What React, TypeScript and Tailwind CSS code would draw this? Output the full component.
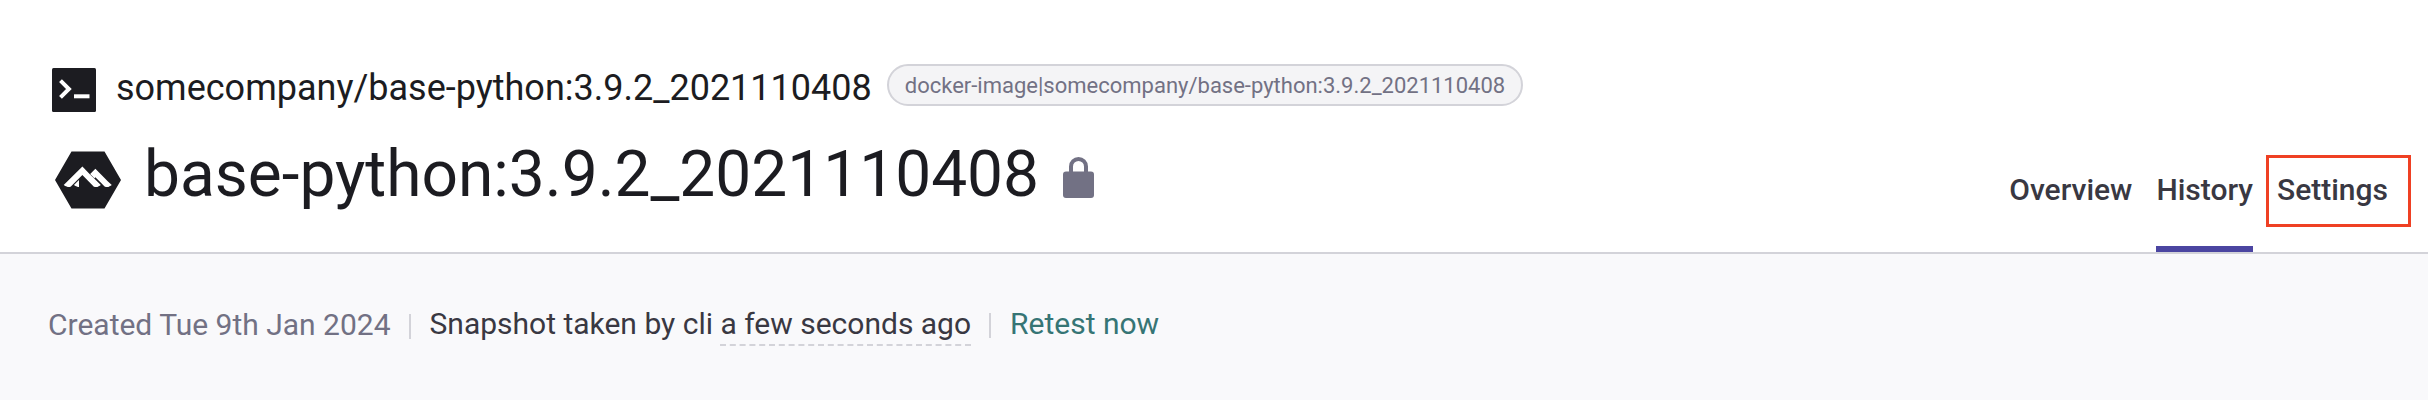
import { SiAlpinelinux } from "react-icons/si";

function TerminalIcon() {
  return (
    <svg className="h-11 w-11 shrink-0" viewBox="0 0 44 44" fill="none">
      <rect width="44" height="44" rx="1.5" fill="#1c1c21" />
      <path d="M8.5 12.7 L16.9 21 L8.5 29.3" stroke="#fff" strokeWidth="4" />
      <path d="M22 28.3H37.500" stroke="#fff" strokeWidth="4" />
    </svg>
  );
}

function LockIcon() {
  return (
    <svg className="h-[41px] w-[31px]" viewBox="0 0 31 41" fill="none">
      <rect y="14.500" width="31" height="26.500" rx="3" fill="#727184" />
      <path d="M8 15V9.500a7.500 7.500 0 0 1 15 0V15" stroke="#727184" strokeWidth="4" />
    </svg>
  );
}

export default function App() {
  return (
    <div className="h-[400px] w-full overflow-hidden bg-[#f9f9fb] font-['Roboto',sans-serif] whitespace-nowrap">
      <header className="flex h-[254px] justify-between border-b-2 border-[#d3d3d9] bg-white">
        <div className="pt-[62px] pl-[52px]">
          <div className="flex h-[50px] items-start">
            <div className="pt-1.5">
              <TerminalIcon />
            </div>
            <span className="ml-5 text-[36px] leading-[52px] text-[#1c1c21]">
              somecompany/base-python:3.9.2_2021110408
            </span>
            <span className="mt-0.5 ml-[15px] h-[42px] rounded-full border-2 border-[#d3d3d9] bg-[#f4f4f6] px-4 text-[22px] leading-[39px] text-[#727184]">
              docker-image|somecompany/base-python:3.9.2_2021110408
            </span>
          </div>
          <div className="mt-5 flex h-[84px] items-start pl-[3px]">
            <SiAlpinelinux className="mt-[15px] h-[66px] w-[66px] shrink-0 text-[#1c1c21]" />
            <h1 className="ml-[23px] text-[64px] leading-[85px] text-[#1c1c21]">
              base-python:3.9.2_2021110408
            </h1>
            <div className="mt-[25px] ml-6">
              <LockIcon />
            </div>
          </div>
        </div>
        <nav className="flex h-[252px] items-stretch pt-[155px] pr-[17px] text-[30px] font-medium text-[#393842]">
          <a className="mr-6 leading-[69px]">Overview</a>
          <a className="mr-[13px] border-b-[6px] border-[#4b45a1] leading-[69px]">History</a>
          <a className="flex h-[72px] w-[145px] items-start border-[3px] border-[#ef4023] pl-2 leading-[63px]">
            Settings
          </a>
        </nav>
      </header>
      <div className="flex items-start pt-[49px] pl-12 text-[30px] leading-[41px]">
        <span className="mt-px text-[#727184]">Created Tue 9th Jan 2024</span>
        <span className="mt-[11px] ml-[18px] h-[25px] w-0.5 bg-[#d3d3d9]" />
        <span className="ml-[19px] text-[#393842]">
          Snapshot taken by cli{" "}
          <span className="inline-block h-[43px] border-b-2 border-dashed border-[#d3d3d9]">a few seconds ago</span>
        </span>
        <span className="mt-2.5 ml-[18px] h-[25px] w-0.5 bg-[#d3d3d9]" />
        <a className="ml-[19px] text-[#367575]">Retest now</a>
      </div>
    </div>
  );
}
